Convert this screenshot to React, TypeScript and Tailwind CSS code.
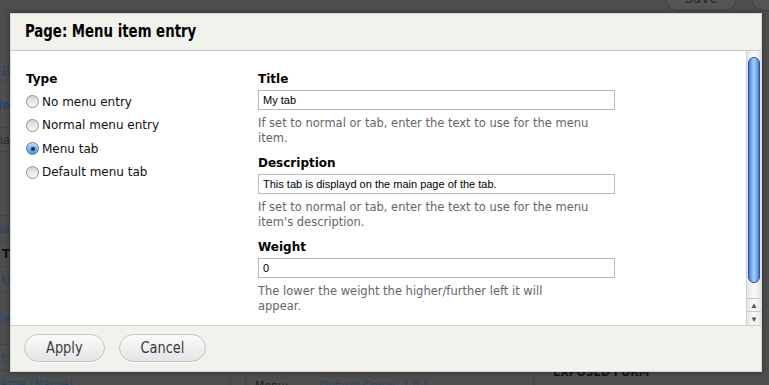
import React from "react";

const body = { fontFamily: "'DejaVu Sans', 'Liberation Sans', sans-serif" };
const cond = { fontFamily: "'Liberation Sans Narrow', 'DejaVu Sans Condensed', 'Roboto Condensed', 'Liberation Sans', sans-serif", fontStretch: "condensed" as const };

function Radio({ checked, label }: { checked?: boolean; label: string }) {
  return (
    <div className="flex items-center h-[23.5px] gap-[3px]">
      {checked ? (
        <span className="w-[13px] h-[13px] rounded-full border border-[#4a7ebf] bg-gradient-to-b from-[#a9cff5] to-[#4f98e6] flex items-center justify-center shadow-[inset_0_1px_1px_rgba(255,255,255,0.6)]">
          <span className="w-[4px] h-[4px] rounded-full bg-[#1c2b3d]" />
        </span>
      ) : (
        <span className="w-[13px] h-[13px] rounded-full border border-[#8e8e8e] bg-gradient-to-b from-[#d4d4d4] to-[#fbfbfb]" />
      )}
      <span className="text-[12px] text-[#111]" style={body}>{label}</span>
    </div>
  );
}

function Field({ label, value, help }: { label: string; value: string; help: React.ReactNode }) {
  return (
    <div className="flex flex-col">
      <div className="text-[12px] font-bold text-black leading-[15px]" style={body}>{label}</div>
      <div className="mt-[3px] w-[357px] h-[20px] border border-[#b9b9b9] bg-white flex items-center px-[4px] text-[11px] text-black" style={{ fontFamily: "'Liberation Sans', Arial, sans-serif" }}>{value}</div>
      <div className="mt-[6px] text-[11.5px] leading-[15px] text-[#666] w-[336px]" style={body}>{help}</div>
    </div>
  );
}

function Btn({ label, w }: { label: string; w: string }) {
  return (
    <div className={`${w} h-[28px] rounded-full border border-[#c4c4c4] bg-gradient-to-b from-[#fbfbfb] to-[#e4e4e4] flex items-center justify-center text-[#3a3a3a] shadow-[0_1px_0_rgba(255,255,255,0.8)]`}>
      <span className="inline-block text-[16px] scale-x-[0.9]" style={cond}>{label}</span>
    </div>
  );
}

export default function App() {
  const leftFrags = [
    { t: "B", c: "text-[#24466a]", h: "h-[22px]" },
    { t: "de", c: "text-[#24466a] font-bold", h: "h-[46px]" },
    { t: "na", c: "text-[#1e2e3e]", h: "h-[24px]" },
    { t: "", c: "", h: "h-[64px]" },
    { t: "xa", c: "text-[#24466a]", h: "h-[26px]" },
    { t: "T", c: "text-[#111] font-bold", h: "h-[25px]" },
    { t: "U", c: "text-[#24466a]", h: "h-[26px]" },
    { t: "Fie", c: "text-[#24466a]", h: "h-[52px]" },
    { t: "t:", c: "text-[#24466a]", h: "h-[26px]" },
  ];
  return (
    <div className="relative w-[769px] h-[385px] overflow-hidden bg-[#4e4e4e]">
      {/* dimmed page behind */}
      <div className="absolute right-[32px] top-[-14px] w-[72px] h-[25px] rounded-full border border-[#3e3e3e] bg-[#555] flex items-center justify-center text-[15px] text-[#2a2a2a]" style={cond}>Save</div>
      <div className="absolute right-[-30px] top-[-14px] w-[48px] h-[25px] rounded-full border border-[#3e3e3e] bg-[#555]" />
      <div className="absolute left-0 top-[60px] w-[10px] flex flex-col overflow-hidden">
        {leftFrags.map((f, i) => (
          <div key={i} className={`${f.h} flex items-center justify-end border-b border-[#454545] text-[13px] whitespace-nowrap ${f.c}`} style={cond}>{f.t}</div>
        ))}
      </div>
      <div className="absolute left-0 top-[374px] text-[13px] text-[#24466a] whitespace-nowrap" style={cond}>ame (Name)</div>
      <div className="absolute left-[230px] top-[372px] w-px h-[13px] bg-[#444]" />
      <div className="absolute left-[245px] top-[372px] w-px h-[13px] bg-[#444]" />
      <div className="absolute left-[255px] top-[377px] text-[12px] text-[#222] whitespace-nowrap" style={cond}>Menu: <span className="text-[#24466a] ml-[28px]">Default Group, 1.0.1</span></div>
      <div className="absolute left-[533px] top-[372px] w-px h-[13px] bg-[#444]" />
      <div className="absolute left-[553px] top-[363px] text-[12px] font-bold text-[#151515]" style={cond}>EXPOSED FORM</div>

      {/* dialog */}
      <div className="absolute left-[10px] top-[13px] w-[752px] h-[359px] flex flex-col bg-[#f2f2ec] border border-[#d6d6d0] shadow-[0_0_6px_rgba(0,0,0,0.4)]">
        <div className="h-[37px] shrink-0 flex items-center pl-[14px] border-b border-[#c9c9c9]">
          <span className="inline-block origin-left scale-x-[0.87] text-[17px] font-bold text-black whitespace-nowrap" style={cond}>Page: Menu item entry</span>
        </div>
        <div className="h-[275px] shrink-0 flex bg-white border-b border-[#cfcfcf]">
          <div className="flex-1 flex pl-[15px] pt-[21px]">
            <div className="w-[232px] flex flex-col">
              <div className="text-[12px] font-bold text-black leading-[15px] mb-[3px]" style={body}>Type</div>
              <Radio label="No menu entry" />
              <Radio label="Normal menu entry" />
              <Radio checked label="Menu tab" />
              <Radio label="Default menu tab" />
            </div>
            <div className="flex flex-col gap-[10px]">
              <Field label="Title" value="My tab" help={<>If set to normal or tab, enter the text to use for the menu item.</>} />
              <Field label="Description" value="This tab is displayd on the main page of the tab." help={<>If set to normal or tab, enter the text to use for the menu item's description.</>} />
              <Field label="Weight" value="0" help={<>The lower the weight the higher/further left it will<br />appear.</>} />
            </div>
          </div>
          {/* scrollbar */}
          <div className="w-[15px] shrink-0 flex flex-col bg-gradient-to-r from-[#e6e6e6] via-[#fafafa] to-[#e6e6e6] border-l border-[#d0d0d0]">
            <div className="h-[6px]" />
            <div className="mx-[1px] h-[226px] rounded-full border border-[#2a4fa0] bg-gradient-to-r from-[#3f82e0] via-[#a9d2ff] to-[#3f82e0]" />
            <div className="flex-1" />
            <div className="h-[13px] flex items-center justify-center border-t border-[#c8c8c8] text-[8px] text-[#555]">▲</div>
            <div className="h-[14px] flex items-center justify-center border-t border-[#c8c8c8] text-[8px] text-[#555]">▼</div>
          </div>
        </div>
        <div className="flex-1 flex items-center gap-[14px] pl-[13px] pb-[1px]">
          <Btn label="Apply" w="w-[81px]" />
          <Btn label="Cancel" w="w-[87px]" />
        </div>
      </div>
    </div>
  );
}
